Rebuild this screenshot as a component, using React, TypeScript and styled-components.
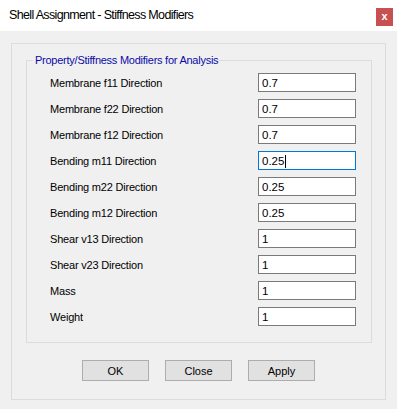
import { FC } from 'react';
import styled, { createGlobalStyle } from 'styled-components';

interface IModifier {
  label: string;
  value: string;
  focused?: boolean;
}

const modifiers: IModifier[] = [
  { label: 'Membrane f11 Direction', value: '0.7' },
  { label: 'Membrane f22 Direction', value: '0.7' },
  { label: 'Membrane f12 Direction', value: '0.7' },
  { label: 'Bending m11 Direction', value: '0.25', focused: true },
  { label: 'Bending m22 Direction', value: '0.25' },
  { label: 'Bending m12 Direction', value: '0.25' },
  { label: 'Shear v13 Direction', value: '1' },
  { label: 'Shear v23 Direction', value: '1' },
  { label: 'Mass', value: '1' },
  { label: 'Weight', value: '1' },
];

const App: FC = () => {
  return (
    <>
      <GlobalStyle />
      <Window>
        <TitleBar>
          <Title>Shell Assignment - Stiffness Modifiers</Title>
          <CloseButton type="button">x</CloseButton>
        </TitleBar>

        <Body>
          <Panel>
            <GroupBox>
              <Legend>Property/Stiffness Modifiers for Analysis</Legend>
              <Rows>
                {modifiers.map(item => (
                  <Row key={item.label}>
                    <Label>{item.label}</Label>
                    <Field $focused={item.focused}>
                      {item.value}
                      {item.focused && <Caret />}
                    </Field>
                  </Row>
                ))}
              </Rows>
            </GroupBox>

            <Buttons>
              <Button type="button">OK</Button>
              <Button type="button">Close</Button>
              <Button type="button">Apply</Button>
            </Buttons>
          </Panel>
        </Body>
      </Window>
    </>
  );
};

export default App;

const GlobalStyle = createGlobalStyle`
  html, body {
    margin: 0;
    padding: 0;
    background: #f0f0f0;
  }
  * {
    box-sizing: border-box;
  }
`;

const Window = styled.div`
  width: 397px;
  height: 409px;
  display: flex;
  flex-direction: column;
  background: #f0f0f0;
  font-family: 'Liberation Sans', Arial, sans-serif;
  font-size: 11px;
  letter-spacing: -0.2px;
  color: #000;
  overflow: hidden;
`;

const TitleBar = styled.div`
  height: 31px;
  flex-shrink: 0;
  display: flex;
  align-items: flex-start;
  justify-content: space-between;
  padding: 0 4px 0 9px;
  background: #fff;
`;

const Title = styled.span`
  margin-top: 8px;
  font-size: 12.5px;
  letter-spacing: -0.65px;
  color: #000;
`;

const CloseButton = styled.button`
  width: 17px;
  height: 18px;
  margin-top: 8px;
  padding: 0 0 2px;
  border: none;
  background: #c75050;
  color: #fff;
  font-family: 'Liberation Sans', Arial, sans-serif;
  font-size: 11px;
  font-weight: 700;
  line-height: 16px;
`;

const Body = styled.div`
  padding: 12px 0 0 11px;
`;

const Panel = styled.div`
  width: 375px;
  height: 357px;
  display: flex;
  flex-direction: column;
  padding: 0 0 0 14px;
  border: 1px solid #dcdcdc;
`;

const GroupBox = styled.fieldset`
  width: 346px;
  margin: 10px 0 0;
  padding: 6px 15px 16px 23px;
  border: 1px solid #dcdcdc;
`;

const Legend = styled.legend`
  margin-left: -17px;
  padding: 0 1px 0 2px;
  line-height: 13px;
  letter-spacing: -0.25px;
  color: #0a0aa8;
`;

const Rows = styled.div`
  display: flex;
  flex-direction: column;
  gap: 7px;
`;

const Row = styled.div`
  display: grid;
  grid-template-columns: 1fr 98px;
  align-items: center;
  height: 19px;
`;

const Label = styled.span`
  padding-top: 1px;
`;

const Field = styled.div<{ $focused?: boolean }>`
  height: 19px;
  display: flex;
  align-items: center;
  padding: 1px 0 0 3px;
  background: #fff;
  border: 1px solid ${({ $focused }) => ($focused ? '#0078d7' : '#7a7a7a')};
  font-size: 11.5px;
  letter-spacing: 0;
`;

const Caret = styled.span`
  width: 1px;
  height: 13px;
  margin-left: 1px;
  background: #000;
`;

const Buttons = styled.div`
  display: flex;
  justify-content: center;
  gap: 16px;
  margin: 17px 14px 0 0;
`;

const Button = styled.button`
  width: 67px;
  height: 21px;
  padding: 1px 0 0;
  border: 1px solid #adadad;
  background: #e1e1e1;
  font-family: 'Liberation Sans', Arial, sans-serif;
  font-size: 11px;
  color: #000;
`;
